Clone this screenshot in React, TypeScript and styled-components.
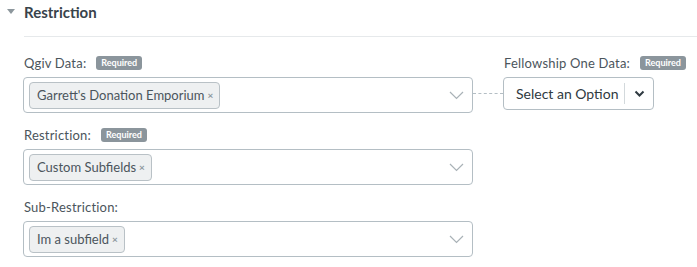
import React from 'react';
import styled, { createGlobalStyle } from 'styled-components';

const GlobalStyle = createGlobalStyle`
  html, body {
    margin: 0;
    padding: 0;
    background: #ffffff;
  }
  body {
    font-family: 'Lato', 'Open Sans', sans-serif;
    color: #3f4a52;
  }
`;

const Section = styled.div`
  width: 697px;
  height: 267px;
  overflow: hidden;
  box-sizing: border-box;
`;

const Header = styled.div`
  display: flex;
  align-items: center;
  height: 23px;
  padding: 0 0 0 7px;
`;

const Caret = styled.span`
  width: 0;
  height: 0;
  border-left: 4px solid transparent;
  border-right: 4px solid transparent;
  border-top: 5px solid #8d979d;
  margin-right: 9px;
`;

const Title = styled.h3`
  margin: 0;
  font-size: 15px;
  font-weight: 700;
  color: #38434b;
`;

const Divider = styled.hr`
  margin: 13px 0 0 24px;
  border: none;
  border-top: 1px solid #e6e9eb;
`;

const Body = styled.div`
  display: flex;
  align-items: flex-start;
  padding: 19px 0 0 23px;
`;

const Column = styled.div`
  display: flex;
  flex-direction: column;
`;

const Field = styled.div`
  display: flex;
  flex-direction: column;
  margin-bottom: 15px;
`;

const LabelRow = styled.div`
  display: flex;
  align-items: center;
  height: 14px;
  margin-bottom: 7px;
  padding-left: 1px;
`;

const Label = styled.span`
  font-size: 13px;
  color: #4b555c;
  letter-spacing: 0.2px;
`;

const Badge = styled.span`
  margin-left: 10px;
  background: #8b959c;
  color: #ffffff;
  font-size: 9px;
  font-weight: 700;
  padding: 2px 5px;
  border-radius: 3px;
  line-height: 10px;
`;

const SelectBox = styled.div`
  width: 450px;
  height: 36px;
  box-sizing: border-box;
  border: 1px solid #b4bec4;
  border-radius: 4px;
  display: flex;
  align-items: center;
  padding: 0 7px 0 5px;
  background: #fff;
`;

const Tag = styled.span`
  display: inline-flex;
  align-items: center;
  height: 27px;
  box-sizing: border-box;
  padding: 0 6px 0 7px;
  background: #eef0f1;
  border: 1px solid #b9c1c6;
  border-radius: 4px;
  font-size: 13px;
  color: #4b555c;
`;

const Remove = styled.span`
  margin-left: 3px;
  font-size: 10px;
  color: #8d979d;
  font-weight: 700;
`;

const Chevron = styled.svg`
  margin-left: auto;
  margin-right: 1px;
`;

const Connector = styled.div`
  width: 30px;
  margin-top: 37px;
  border-top: 1px dashed #b4bec4;
`;

const OptionButton = styled.div`
  display: flex;
  align-items: center;
  width: 151px;
  height: 33px;
  box-sizing: border-box;
  border: 1px solid #b4bec4;
  border-radius: 4px;
  background: #fff;
`;

const OptionText = styled.span`
  flex: 1;
  padding-left: 12px;
  font-size: 14px;
  color: #2f3a41;
`;

const OptionArrow = styled.span`
  display: flex;
  align-items: center;
  justify-content: center;
  width: 28px;
  height: 21px;
  border-left: 1px solid #d3d9dc;
`;

const ChevronDown = () => (
  <Chevron width="15" height="9" viewBox="0 0 15 9">
    <path d="M1 1l6.5 6.5L14 1" fill="none" stroke="#a9b2b7" strokeWidth="1.2" />
  </Chevron>
);

const fields = [
  { label: 'Qgiv Data:', required: true, tag: "Garrett's Donation Emporium" },
  { label: 'Restriction:', required: true, tag: 'Custom Subfields' },
  { label: 'Sub-Restriction:', required: false, tag: 'Im a subfield' },
];

const App: React.FC = () => {
  return (
    <Section>
      <GlobalStyle />
      <Header>
        <Caret />
        <Title>Restriction</Title>
      </Header>
      <Divider />
      <Body>
        <Column>
          {fields.map((f, i) => (
            <Field key={`field-${i}`}>
              <LabelRow>
                <Label>{f.label}</Label>
                {f.required && <Badge>Required</Badge>}
              </LabelRow>
              <SelectBox>
                <Tag>
                  {f.tag}
                  <Remove>×</Remove>
                </Tag>
                <ChevronDown />
              </SelectBox>
            </Field>
          ))}
        </Column>
        <Connector />
        <Column>
          <LabelRow>
            <Label>Fellowship One Data:</Label>
            <Badge>Required</Badge>
          </LabelRow>
          <OptionButton>
            <OptionText>Select an Option</OptionText>
            <OptionArrow>
              <svg width="11" height="7" viewBox="0 0 11 7">
                <path d="M1.5 1.5l4 4 4-4" fill="none" stroke="#2f3a41" strokeWidth="2" />
              </svg>
            </OptionArrow>
          </OptionButton>
        </Column>
      </Body>
    </Section>
  );
};

export default App;
